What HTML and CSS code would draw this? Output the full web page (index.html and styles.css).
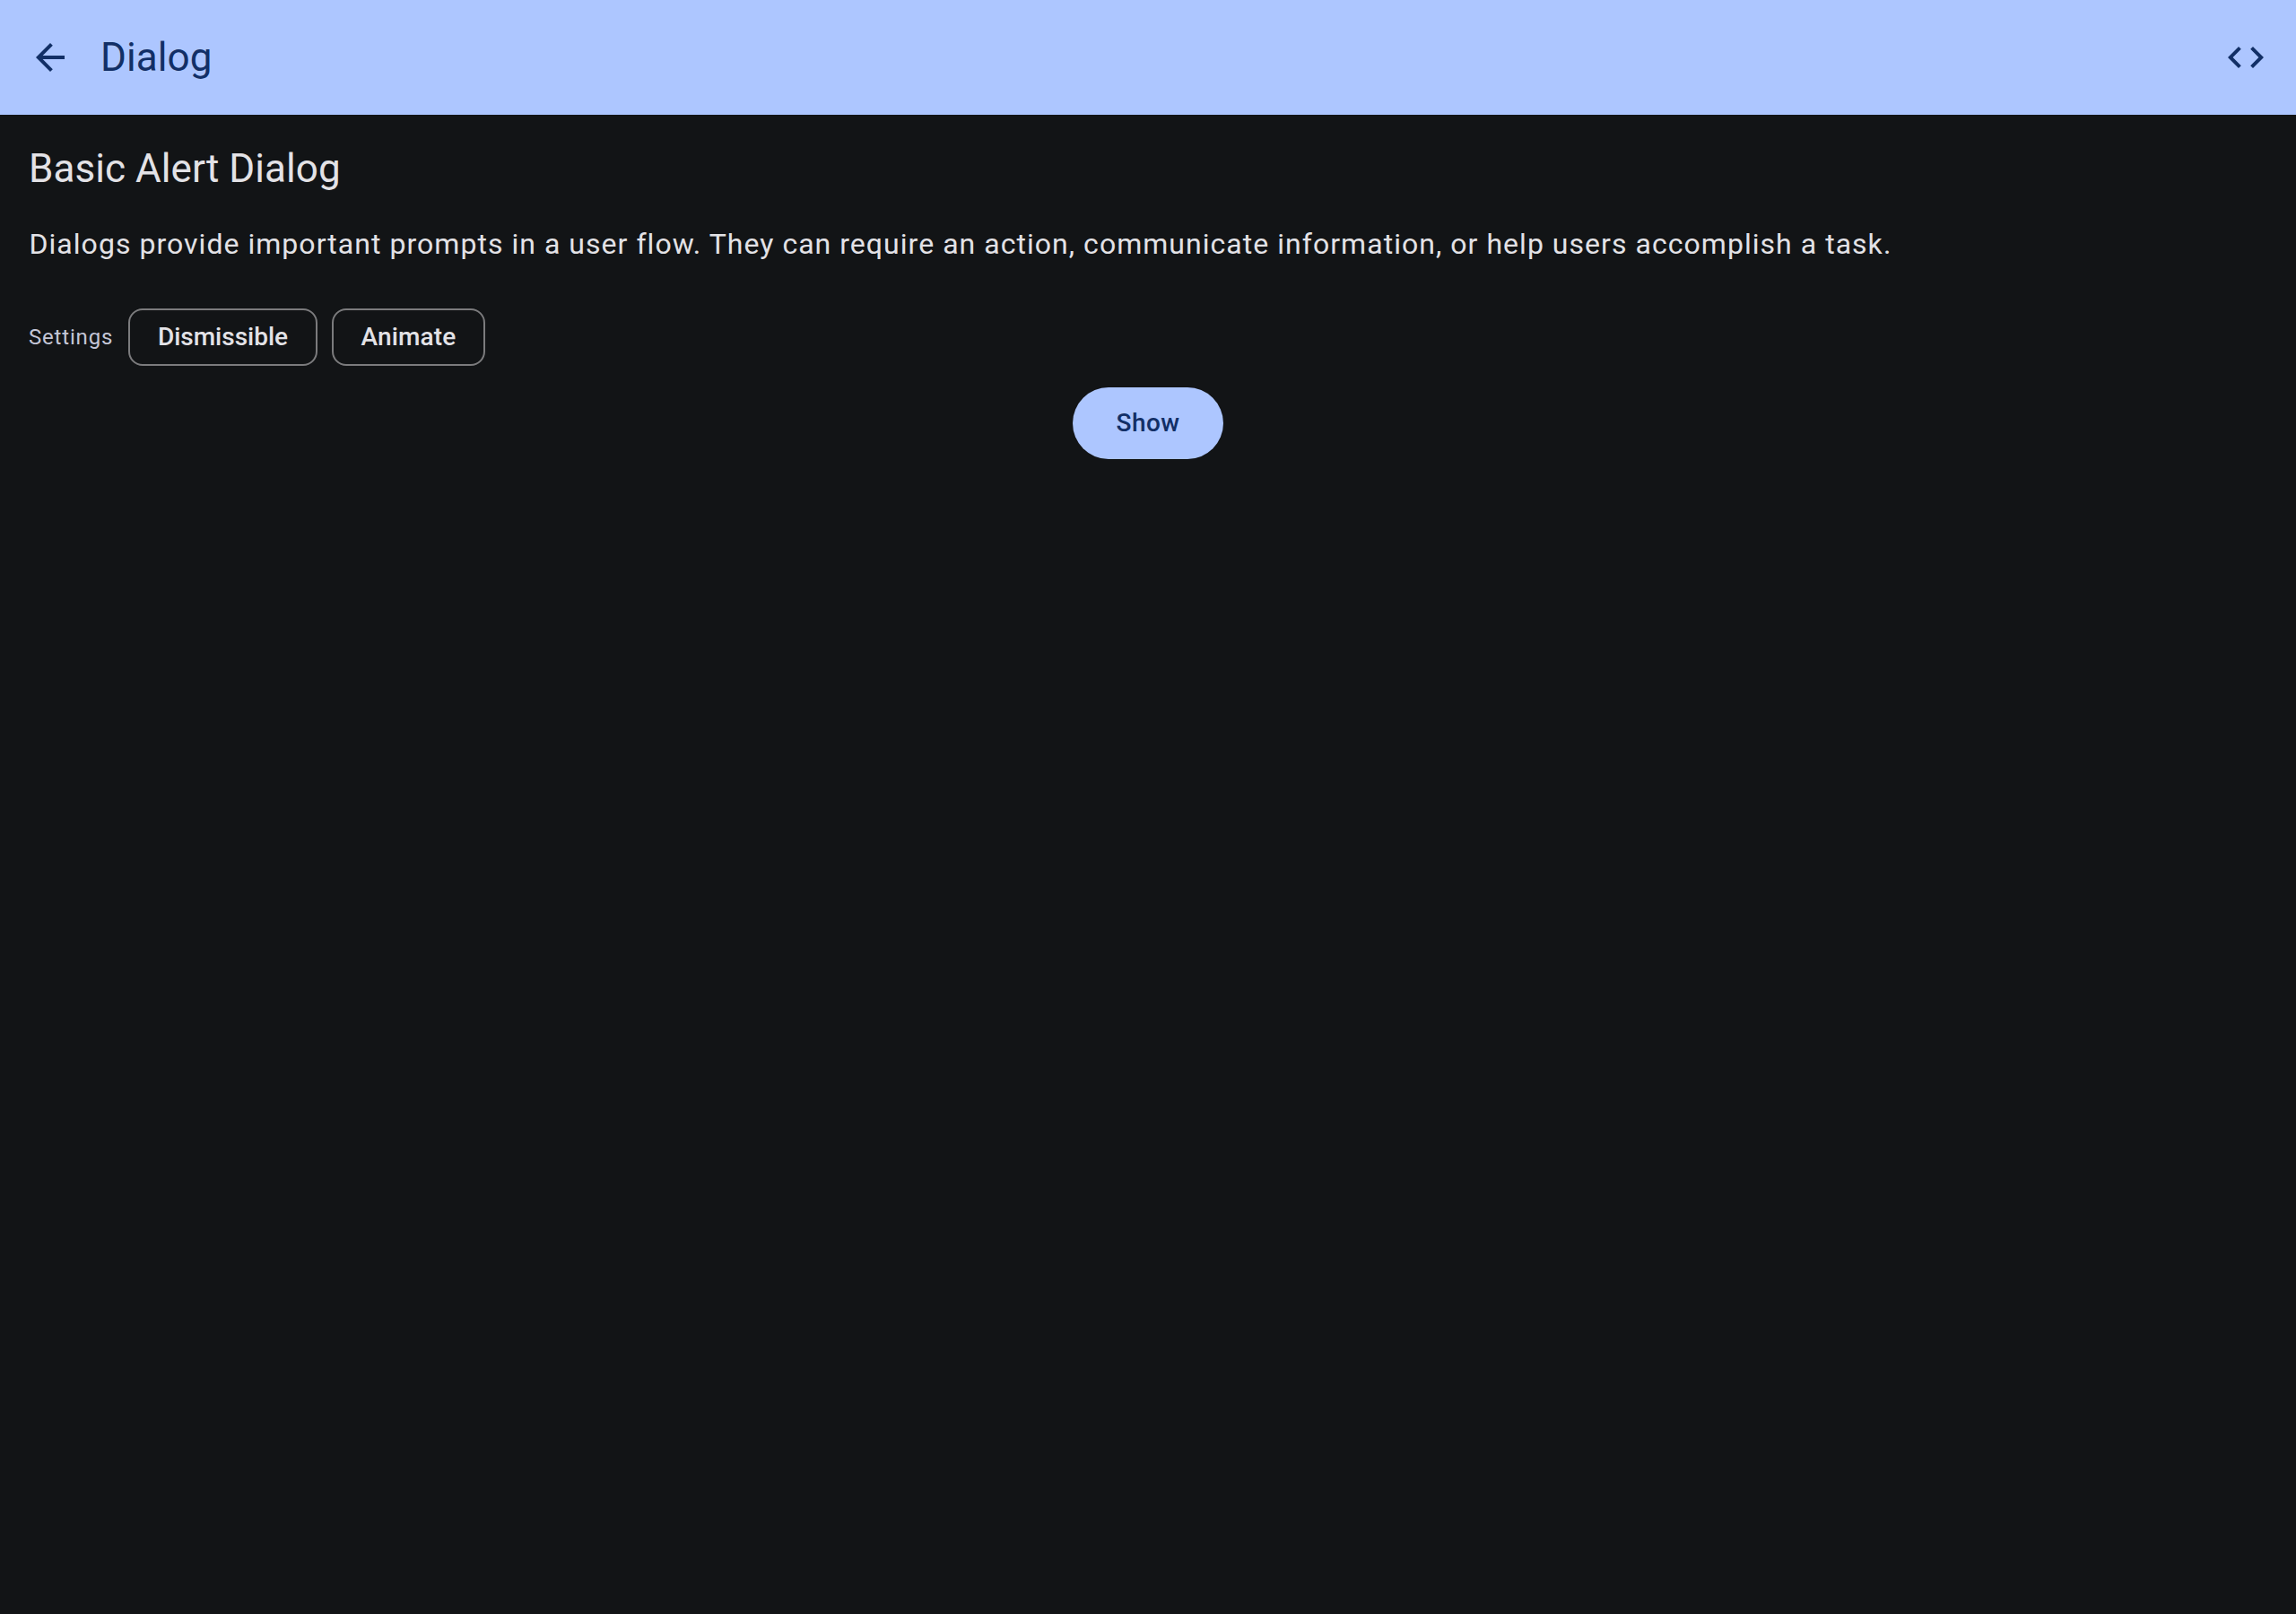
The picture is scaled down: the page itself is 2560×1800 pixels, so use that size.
FILE: index.html
```html
<!DOCTYPE html>
<html lang="en">
<head>
<meta charset="utf-8">
<title>Dialog</title>
<link rel="stylesheet" href="styles.css">
</head>
<body>
<header class="app-bar">
  <svg class="icon" viewBox="0 0 24 24"><path d="M20 11H7.83l5.59-5.59L12 4l-8 8 8 8 1.41-1.41L7.83 13H20v-2z"/></svg>
  <h1 class="app-title">Dialog</h1>
  <svg class="icon" viewBox="0 0 24 24"><path d="M9.4 16.6 4.8 12l4.6-4.6L8 6l-6 6 6 6 1.4-1.4zm5.2 0 4.6-4.6-4.6-4.6L16 6l6 6-6 6-1.4-1.4z"/></svg>
</header>
<main class="content">
  <h2 class="heading">Basic Alert Dialog</h2>
  <p class="description">Dialogs provide important prompts in a user flow. They can require an action, communicate information, or help users accomplish a task.</p>
  <div class="settings">
    <span class="settings-label">Settings</span>
    <button class="chip chip-dismissible">Dismissible</button>
    <button class="chip chip-animate">Animate</button>
  </div>
  <button class="show">Show</button>
</main>
</body>
</html>
```
FILE: styles.css
```css
* { box-sizing: border-box; }
body { margin: 0; min-height: 1800px; background: #121416; color: #e3e2e6; font-family: Roboto, sans-serif; }
.app-bar { display: flex; align-items: center; height: 128px; padding: 0 32px; background: #adc6ff; color: #122f66; }
.icon { width: 48px; height: 48px; fill: currentColor; }
.app-title { flex: 1; margin: 0 0 0 32px; font-size: 44px; font-weight: 400; line-height: 56px; letter-spacing: .1px; }
.content { display: flex; flex-direction: column; padding: 32px; }
.heading { margin: 0; font-size: 44px; font-weight: 400; line-height: 56px; letter-spacing: .05px; }
.description { margin: 32px 0 0; padding-left: .5px; font-size: 32px; letter-spacing: 1.035px; line-height: 48px; }
.settings { display: flex; align-items: center; gap: 16px; margin-top: 48px; }
.settings-label { width: 95px; font-size: 24px; letter-spacing: .82px; color: #c4c6d6; white-space: nowrap; }
.chip { height: 64px; padding: 0; border: 2px solid #7b7b7d; border-radius: 16px; background: transparent; color: inherit; font: 500 28px/40px Roboto, sans-serif; letter-spacing: 0; text-align: center; }
.chip-dismissible { width: 211px; }
.chip-animate { width: 171px; letter-spacing: .15px; }
.show { align-self: center; width: 168px; height: 80px; margin-top: 24px; padding: 0; border: 0; border-radius: 40px; background: #adc6ff; color: #122f66; font: 500 28px/40px Roboto, sans-serif; letter-spacing: .4px; text-align: center; }
```
